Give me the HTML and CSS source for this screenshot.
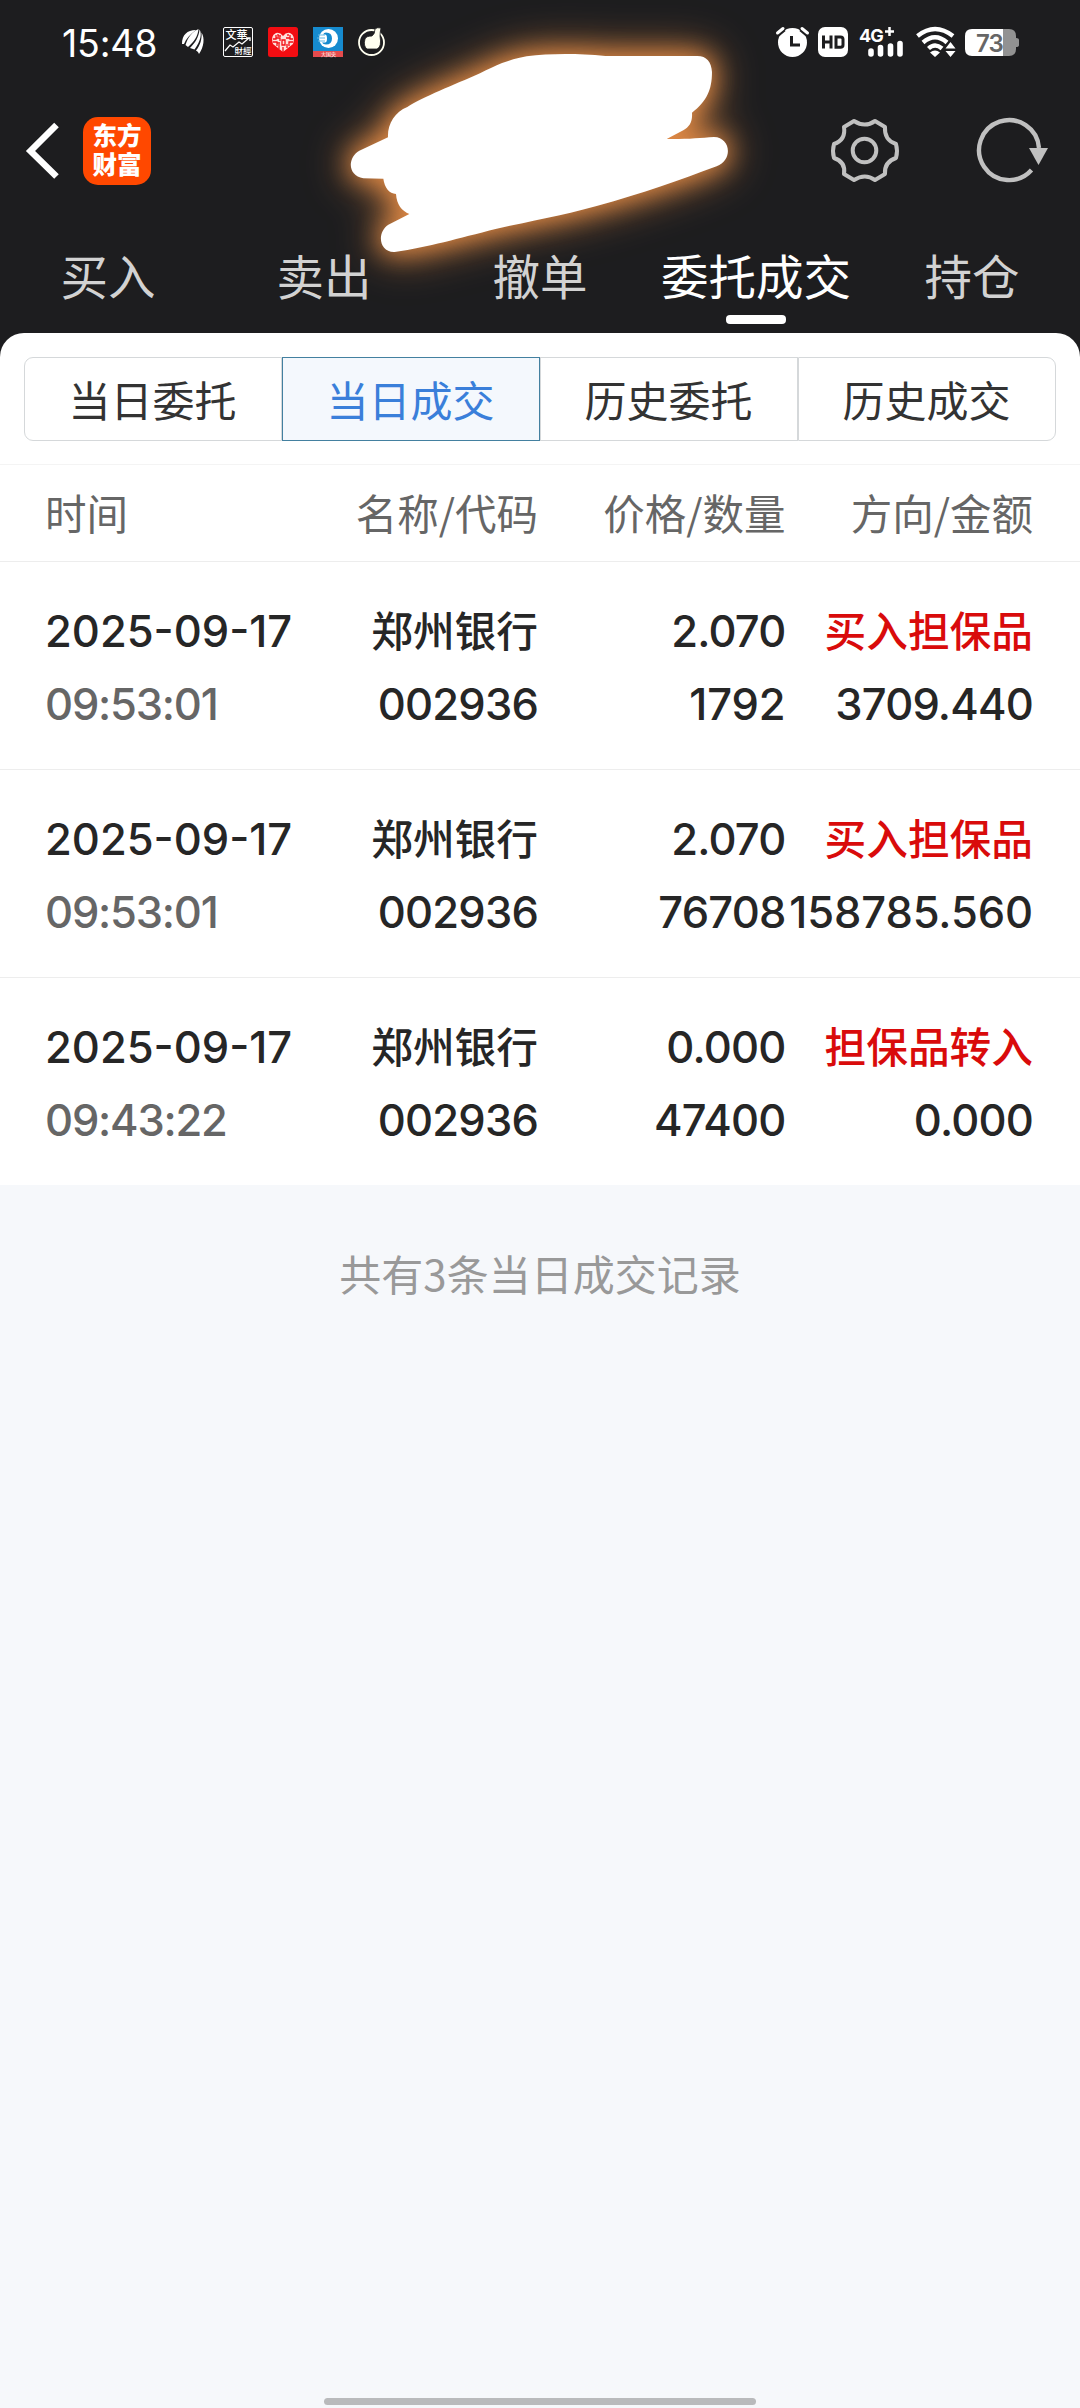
FILE: index.html
```html
<!DOCTYPE html>
<html lang="zh-CN">
<head>
<meta charset="utf-8">
<title>当日成交</title>
<link rel="stylesheet" href="styles.css">
</head>
<body>
<header class="top">
  <svg class="scribble" viewBox="0 0 1080 333" width="1080" height="333" aria-hidden="true">
    <g transform="translate(320 30) scale(.33333)"><path fill="#fff" d="M204 322 L118 362 C82 382 82 438 130 445 L190 446 C194 474 208 490 228 492 C230 524 246 543 268 552 L205 584 C170 606 176 668 224 666 C330 650 410 626 530 596 C640 572 720 558 830 528 C970 490 1080 450 1190 409 C1240 390 1232 322 1182 321 C1140 324 1100 328 1040 327 L1090 301 C1108 290 1118 276 1116 248 C1160 214 1176 180 1176 126 C1174 96 1160 78 1132 78 L856 78 C770 70 690 70 620 79 C560 90 530 106 480 130 C400 166 310 200 262 231 C224 246 202 284 204 322Z"/></g>
  </svg>
  <div class="status">
    <span class="clock">15:48</span>
    <div class="apps">
      <svg width="22" height="26" viewBox="0 0 22 26"><path fill="#fff" d="M0 15C0 6 5 1 14 1C8 5 4 10 2 15ZM3.500 16C6 8 10 3 16.500 0C16 7 12 13 6 18ZM8 19C13 14 17 8 17.500 0.500C20 4 19 12 12.500 20.500ZM14 21.500C18.500 16 20 10 19.500 3.500C23 9 22 18 17 25Q16.500 22.500 14 21.500Z"/></svg>
      <svg width="30" height="30" viewBox="0 0 30 30"><rect x=".5" y=".5" width="29" height="29" rx="1.5" fill="#1d1d1f" stroke="#fff"/><text x="2.5" y="12" class="wh">文華</text><text x="11.5" y="27" class="wh wh-s">財經</text><path d="M2 24l5-6 3 2 6-5 3 2 7-6M23 11h4v3" fill="none" stroke="#fff" stroke-width="1.3"/></svg>
      <svg width="30" height="30" viewBox="0 0 30 30"><rect width="30" height="30" rx="2.5" fill="#f20d12"/><path d="M15 25L5 17Q2 9 8 6Q12 5 15 9Q18 5 22 6Q28 9 25 17Z" fill="#ffe0dc"/><path d="M5 12h3v-4M8 11h4v3M5 15h4v4M10 7v2h3M11 17v5M14 13h3v5h-3zM25 12h-3v-4M22 11h-4M25 15h-4v4M19 17v4M20 7v2M12 16h-3M15 20v5" fill="none" stroke="#f20d12" stroke-width="1.3"/></svg>
      <svg width="30" height="30" viewBox="0 0 30 30"><rect width="30" height="30" fill="#168bcf"/><circle cx="15.500" cy="11.500" r="9.500" fill="#fff"/><path d="M13 5.500q6 0 6 6t-6 6q-3 0-4-2h3q2 0 2-4t-2-4h-2q1-2 3-2z" fill="#168bcf"/><path d="M5 8h7M4 11h8M5 14h7" stroke="#65b9e5" stroke-width="1.200"/><rect y="24" width="30" height="6" fill="#e44b4d"/><text x="8" y="29" class="mini">大国央</text></svg>
      <svg width="28" height="30" viewBox="0 0 28 30"><circle cx="13.500" cy="15.500" r="12.500" fill="#1d1d1f" stroke="#fffff0" stroke-width="1.800"/><path d="M7 12Q8 9 14 9Q17 7 17 2Q19 0 23 1Q22 5 22 9Q24 20 19 22H9Q5 19 7 12Z" fill="#fffff0" stroke="#1d1d1f" stroke-width=".8"/></svg>
    </div>
    <div class="system">
      <svg class="alarm" width="34" height="30" viewBox="0 0 34 30"><circle cx="16.500" cy="15.500" r="14.500" fill="#fff"/><path d="M2 7L8 2M25 2L31 7" stroke="#1d1d1f" stroke-width="5"/><path d="M1.500 6L7 1.500M26 1.500L31.500 6" stroke="#fff" stroke-width="3" stroke-linecap="round"/><path d="M15.500 9v9H24" fill="none" stroke="#1d1d1f" stroke-width="3"/></svg>
      <svg class="hd" width="30" height="30" viewBox="0 0 30 30"><rect width="30" height="30" rx="7" fill="#fff"/><path d="M5.500 8.500v13M13 8.500v13M5.500 15h7.500M18 10v10.300h4.500q2.500 0 2.500-2.300v-5.700q0-2.300-2.500-2.300z" fill="none" stroke="#1d1d1f" stroke-width="3"/></svg>
      <svg class="signal" width="46" height="30" viewBox="0 0 46 30"><text x="0" y="14.500" class="net">4G</text><path d="M26 4.500h9M30.500 0v9" stroke="#fff" stroke-width="2.500"/><path d="M12 24v3M21.500 20.500v6.500M31.500 19v8M41 16.500V27" stroke="#fff" stroke-width="5.600" stroke-linecap="round"/></svg>
      <svg class="wifi" width="40" height="30" viewBox="0 0 40 30"><g fill="none" stroke="#fff" stroke-width="4.400"><path d="M1.500 9Q19 -5 37 9"/><path d="M7 15.500Q19 5 31 15.500"/><path d="M12.500 21.500Q19 15.500 26 21.500"/></g><path d="M14 25.500q5-4 10 0L19 30ZM29.500 21.500L34.500 15L39.500 21.500ZM29.500 24H39.500L34.500 30Z" fill="#fff"/></svg>
      <svg width="54" height="27" viewBox="0 0 54 27"><path d="M7 0H38V27H7Q0 27 0 20V7Q0 0 7 0Z" fill="#fff"/><path d="M38 0H44Q51 0 51 7V9Q54 9 54 11V16Q54 18 51 18V20Q51 27 44 27H38Z" fill="#929292"/><text x="11" y="22.500" class="bat">73</text></svg>
    </div>
  </div>
  <div class="bar">
    <svg class="back" width="34" height="56" viewBox="0 0 34 56"><path d="M30.500 2L4.500 28L30.500 53.500" fill="none" stroke="#fff" stroke-width="6.500"/></svg>
    <div class="logo"><span>东方</span><span>财富</span></div>
    <svg class="gear" width="68" height="66" viewBox="0 0 68 66"><path fill="none" stroke="#c0c0c0" stroke-width="4" stroke-linejoin="round" d="M23 3Q34 10 44 3L54 9Q53 22 65 26Q67 33 65 40Q53 44 54 56L44 62Q34 55 23 62L13 56Q15 44 3 40Q1 33 3 26Q15 22 13 9Z"/><circle cx="33.500" cy="32.500" r="11.800" fill="none" stroke="#c0c0c0" stroke-width="4"/></svg>
    <svg class="refresh" width="72" height="66" viewBox="0 0 72 66"><path fill="none" stroke="#c0c0c0" stroke-width="4.400" d="M54.500 52A30 30 0 1 1 62 30"/><path d="M52 30H71L61.500 47Z" fill="#c0c0c0"/></svg>
  </div>
  <nav class="nav"><a>买入</a><a>卖出</a><a>撤单</a><a class="on">委托成交</a><a>持仓</a></nav>
</header>
<main class="panel">
  <div class="tabs"><a>当日委托</a><a class="on">当日成交</a><a>历史委托</a><a>历史成交</a></div>
  <div class="row head"><span>时间</span><span>名称/代码</span><span>价格/数量</span><span>方向/金额</span></div>
  <div class="row rec"><div><p class="date">2025-09-17</p><p class="time">09:53:01</p></div><div><p class="name">郑州银行</p><p class="num">002936</p></div><div><p class="num">2.070</p><p class="num loose">1792</p></div><div><p class="name red">买入担保品</p><p class="num">3709.440</p></div></div>
  <div class="row rec"><div><p class="date">2025-09-17</p><p class="time">09:53:01</p></div><div><p class="name">郑州银行</p><p class="num">002936</p></div><div><p class="num">2.070</p><p class="num">76708</p></div><div><p class="name red">买入担保品</p><p class="num loose">158785.560</p></div></div>
  <div class="row rec"><div><p class="date">2025-09-17</p><p class="time">09:43:22</p></div><div><p class="name">郑州银行</p><p class="num">002936</p></div><div><p class="num">0.000</p><p class="num">47400</p></div><div><p class="name red">担保品转入</p><p class="num">0.000</p></div></div>
</main>
<p class="total">共有3条当日成交记录</p>
<div class="home"></div>
</body>
</html>
```
FILE: styles.css
```css
* { box-sizing: border-box; margin: 0; padding: 0; }
body {
  width: 1080px; height: 2408px; overflow: hidden;
  display: flex; flex-direction: column;
  background: #f6f8fb; color: #262626;
  font-family: "Noto Sans CJK SC", sans-serif; font-size: 42px;
}
svg { display: block; flex: none; overflow: visible; }
.top { position: relative; height: 333px; flex: none; background: #1d1d1f; color: #fff; box-shadow: 0 30px 0 #1d1d1f; }
.scribble { position: absolute; left: 0; top: 0; overflow: hidden; filter: drop-shadow(0 0 12px rgba(224, 138, 69, .85)) drop-shadow(0 0 19px rgba(224, 138, 69, .95)); }
.status { position: relative; height: 84px; display: flex; align-items: center; padding: 0 61px 0 62px; }
.clock { font: 400 37.500px/1 Inter, sans-serif; width: 120px; letter-spacing: -.2px; padding-top: 3px; }
.apps { display: flex; align-items: center; gap: 15px; }
.apps svg:first-child { margin-right: 4px; }
.wh { font: 500 11px "Noto Sans CJK TC", sans-serif; fill: #fff; }
.wh-s { font-size: 8.500px; }
.mini { font: 5px "Noto Sans CJK SC", sans-serif; fill: #fff; }
.system { display: flex; align-items: center; margin-left: auto; }
.alarm { margin-right: 8px; }
.hd { margin-right: 11px; }
.signal { margin-right: 11px; }
.wifi { margin-right: 9px; }
.net { font: 700 18px Inter, sans-serif; fill: #fff; letter-spacing: -1px; }
.bat { font: 600 24px Inter, sans-serif; fill: #666; letter-spacing: -1px; }
.bar { position: relative; height: 134px; display: flex; align-items: center; padding: 0 31px 0 26px; }
.logo {
  display: flex; flex-direction: column; align-items: center;
  width: 68px; height: 68px; margin-left: 23px; border-radius: 15px;
  background: #ff4800; font-weight: 900; font-size: 24.500px; line-height: 29px;
  padding-top: 3px;
}
.gear { margin-left: auto; }
.refresh { margin-left: 78px; }
.nav { position: relative; height: 115px; display: grid; grid-template-columns: repeat(5, 216px); }
.nav a { display: flex; flex-direction: column; align-items: center; font-size: 47.500px; line-height: 70px; padding-top: 22px; color: #d2d2d2; white-space: nowrap; }
.nav .on { color: #fff; }
.nav .on::after { content: ""; width: 60px; height: 9px; border-radius: 4px; background: #fff; margin-top: 5px; }
.panel { position: relative; background: #fff; border-radius: 24px 24px 0 0; padding-top: 24px; flex: none; }
.tabs { height: 84px; margin: 0 24px 23px; display: grid; grid-template-columns: repeat(4, 1fr); }
.tabs a { height: 84px; border: 1px solid #d5d8da; line-height: 81px; text-align: center; color: #333; padding-right: 1px; }
.tabs a:first-child { border-radius: 9px 0 0 9px; }
.tabs a:last-child { border-radius: 0 9px 9px 0; }
.tabs .on { border-color: #4380a0; background: #f4f8fd; color: #3a7fda; }
.row { display: grid; grid-template-columns: repeat(4, 247.500px); padding: 0 47px 0 43px; border-top: 1px solid #ededed; text-align: right; white-space: nowrap; }
.row > :first-child { text-align: left; padding-left: 2px; }
.head { height: 97px; line-height: 95px; color: #666; border-color: #f4f4f4; font-size: 41.500px; }
.rec { height: 208px; padding-top: 33px; font-weight: 500; }
.rec p { height: 73px; line-height: 73px; }
.rec .name { line-height: 69px; font-size: 41.700px; }
.num, .date, .time { font-family: Inter, sans-serif; font-size: 43.500px; letter-spacing: -.8px; }
.rec .date { letter-spacing: 0; }
.rec .time { color: #666; letter-spacing: -1.200px; }
.rec .loose { letter-spacing: -.1px; }
.red { color: #d90b0b; }
.total { text-align: center; color: #999; line-height: 62px; margin-top: 57px; }
.home { width: 432px; height: 7px; border-radius: 3.500px; background: #b9babc; margin: auto auto 3px; }
```
